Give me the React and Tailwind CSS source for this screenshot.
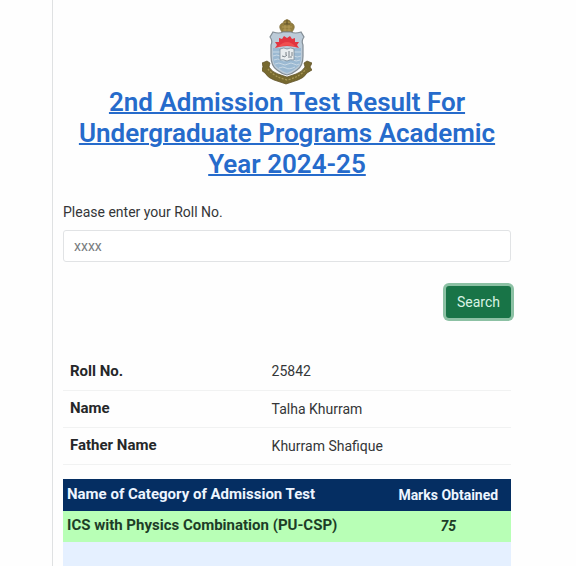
function Crest() {
  return (
    <svg viewBox="0 0 50 66" className="mx-auto block h-[66px] w-[50px]" role="img" aria-label="University crest">
      <path d="M20 13Q16 8 19 5Q22 4 22 2Q25 -1 28 2Q28 4 31 5Q34 8 30 13Z" fill="#95803f" stroke="#7b6836" strokeWidth=".7" />
      <path d="M20 8h10M21 11h8M23 3v9M27 3v9" stroke="#b9a05c" strokeWidth=".8" />
      <path d="M22 5h6M25 1v4" stroke="#5f5029" strokeWidth="1" />
      <path d="M0 44l5-2 3 2-1 4q3 5 9 7l9 3 9-3q6-2 9-7l-1-4 3-2 5 2-2 4 2 3-5 3q-3 5-9 7l-12 4-12-4q-6-2-9-7l-4-3 2-3Z" fill="#77692f" stroke="#5b4e25" strokeWidth=".7" />
      <path d="M6 50q6 8 19 11q13-3 19-11" fill="none" stroke="#a89754" strokeWidth="1.3" strokeDasharray="2 1.4" />
      <path d="M11 13Q17 15 21 13H29Q33 15 39 13L42 18Q39 22 41 26V37Q41 47 35 51Q30 55 25 56Q20 55 15 51Q9 47 9 37V26Q11 22 8 18Z" fill="#bccbd8" stroke="#838d95" strokeWidth="1.2" />
      <path d="M11 29H39V38Q39 46 34 49Q29 53 25 54Q21 53 16 49Q11 46 11 38Z" fill="#9bb9d2" />
      <path d="M11 33h28M11 37q4-2 7 0t7 0t7 0t7 0M12 41q4-2 7 0t6 0t6 0t7 0M13 45q4-2 7 0t6 0t6 0t5 0M17 49q4-2 7 0t9-1" fill="none" stroke="#d3e0ea" strokeWidth=".8" />
      <path d="M13 29l2-3-2-3 4 0 0-4 3 1 2-3 3 2 3-2 2 3 3-1 0 4 4 0-2 3 2 3q-6-2-12-2t-12 2Z" fill="#e23540" />
      <path d="M16 28Q25 18 34 28Q25 25 16 28Z" fill="#ef4f50" />
      <path d="M18 30q4-2 7 0q4-2 7 0v11q-4-1-7 1q-4-2-7-1Z" fill="#e9edef" stroke="#7e8e9a" strokeWidth=".8" />
      <path d="M20 37q3 2 5-1M24 33v3M27 32v5M30 33v4M26 38h4" fill="none" stroke="#6d767d" strokeWidth=".9" />
    </svg>
  );
}

const details = [
  ["Roll No.", "25842"],
  ["Name", "Talha Khurram"],
  ["Father Name", "Khurram Shafique"],
];

export default function App() {
  return (
    <div className="min-h-screen overflow-hidden bg-[#fefefe] pl-[52px] font-['Roboto',sans-serif] text-sm text-[#343638]">
      <main className="min-h-screen border-l border-[#dfe1e2] pt-[19px] pr-[65px] pl-[10px]">
        <Crest />
        <h1 className="mt-0.5 text-center text-[26px] leading-[31px] font-semibold text-[#266bcb] underline decoration-2">
          2nd Admission Test Result For Undergraduate Programs Academic Year 2024-25
        </h1>
        <form className="mt-[22px]" onSubmit={(event) => event.preventDefault()}>
          <label htmlFor="roll" className="block leading-5">Please enter your Roll No.</label>
          <input
            id="roll"
            placeholder="xxxx"
            className="mt-2 block h-8 w-full rounded-[3px] border border-[#e1e3e5] bg-white px-[10px] text-sm placeholder:text-[#777b7e]"
          />
          <div className="mt-6 flex justify-end">
            <button type="submit" className="h-8 rounded-[3px] bg-[#187447] px-[11px] text-sm text-[#d9f3e5] ring-3 ring-[#8cc1a4]">
              Search
            </button>
          </div>
        </form>

        <table className="mt-[35px] w-full table-fixed border-collapse">
          <tbody>
            {details.map(([label, value]) => (
              <tr key={label} className="h-[37px] border-b border-[#f1f2f2]">
                <th scope="row" className="w-[45%] px-[7px] text-left text-[15px] font-bold text-[#252729]">{label}</th>
                <td className="px-[7px]">{value}</td>
              </tr>
            ))}
          </tbody>
        </table>

        <table className="mt-[14px] w-full table-fixed border-collapse">
          <thead>
            <tr className="h-8 bg-[#052e62] text-[#edf5ff]">
              <th scope="col" className="w-[72%] px-1 text-left text-[15px] font-bold">Name of Category of Admission Test</th>
              <th scope="col" className="text-center font-bold">Marks Obtained</th>
            </tr>
          </thead>
          <tbody>
            <tr className="h-[31px] bg-[#b8ffb6] text-[#1d3d27]">
              <td className="px-1 text-[15px] font-bold">ICS with Physics Combination (PU-CSP)</td>
              <td className="text-center font-bold italic">75</td>
            </tr>
            <tr className="h-8 bg-[#e5f0ff]">
              <td colSpan={2}></td>
            </tr>
          </tbody>
        </table>
      </main>
    </div>
  );
}
